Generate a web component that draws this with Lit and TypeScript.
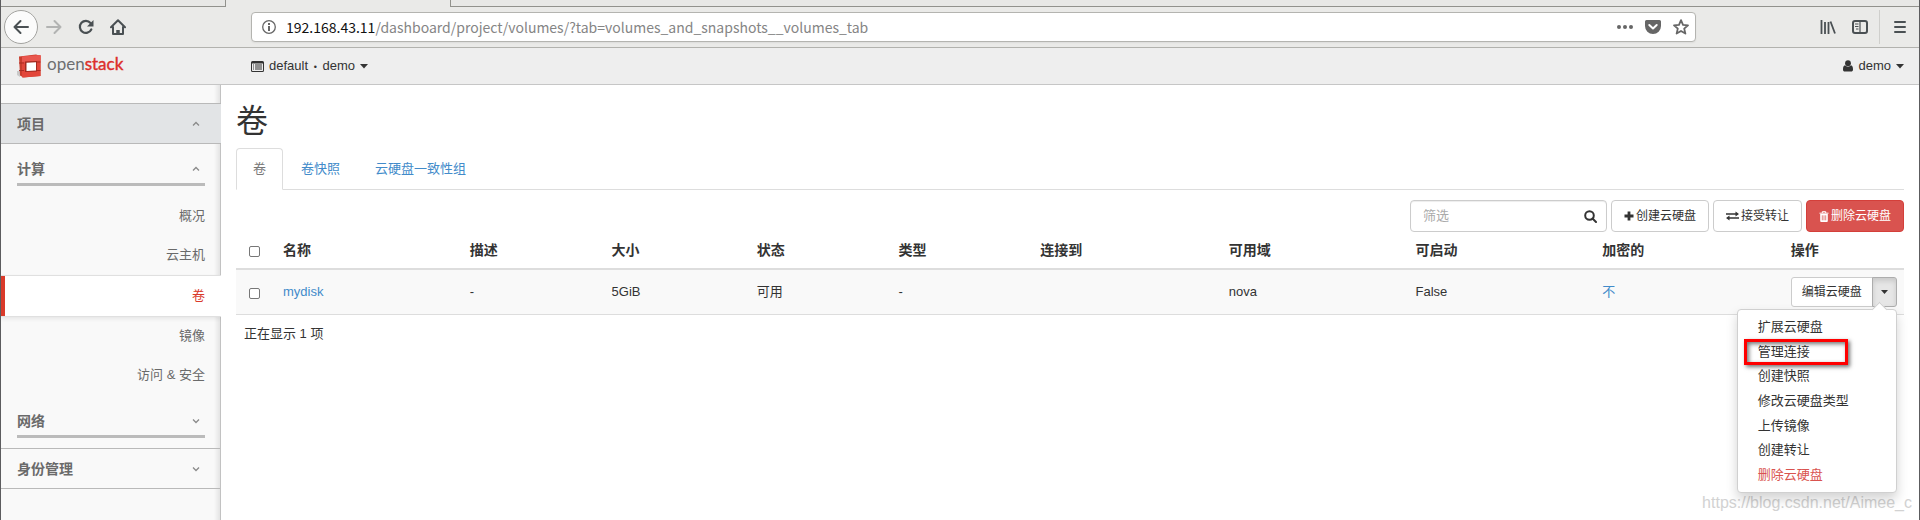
import { LitElement, html, css, svg } from "lit";
import { customElement, property, state } from "lit/decorators.js";
import { classMap } from "lit/directives/class-map.js";

const controls = css`
  :host, *, *::before, *::after { box-sizing: border-box; }
  a { color: inherit; text-decoration: none; }
  button, input { font: inherit; color: inherit; margin: 0; }
  button { cursor: pointer; padding: 0; border: 0; background: none; }
  svg { display: block; flex: none; }
`;

const caret = html`<svg width="8" height="5" viewBox="0 0 8 5"><path d="M0 0h8L4 4.6z" fill="currentColor"/></svg>`;

@customElement("browser-bar")
class BrowserBar extends LitElement {
  static styles = [controls, css`
    :host {
      display: block;
      background: #eaeae8;
      border-bottom: 1px solid #b2b2ae;
      color: #4a5053;
      font-family: "Noto Sans CJK SC", "Noto Sans", sans-serif;
    }
    .tabs { display: flex; height: 7px; }
    .tab { flex: 0 0 225px; background: #e8e8e6; border-bottom: 1px solid #92928d; border-right: 1px solid #92928d; }
    .tab.active { background: none; border-bottom: 0; }
    .rest { flex: 1; background: #e8e8e6; border-bottom: 1px solid #92928d; }
    .bar { display: flex; align-items: center; height: 40px; padding: 0 11px 0 3px; }
    .nav { display: flex; align-items: center; gap: 16px; width: 247px; flex: none; }
    .back {
      display: grid; place-items: center; width: 34px; height: 34px;
      border: 1px solid #a3a3a0; border-radius: 50%; background: #fbfbfb;
    }
    .nav .fwd { margin-left: -8px; color: #b2b3b2; }
    .address {
      display: flex; align-items: center; flex: 0 1 1445px; min-width: 0; height: 30px;
      padding: 0 6px 0 10px; background: #fff; border: 1px solid #b4b4b0; border-radius: 4px;
      box-shadow: 0 1px 2px rgba(0, 0, 0, 0.06); color: #666;
    }
    .url { flex: 1; min-width: 0; margin-left: 10px; font-size: 14px; line-height: 24px; color: #858585; white-space: nowrap; overflow: hidden; }
    .url b { font-weight: 400; color: #111; }
    .tools { display: flex; gap: 12px; }
    .right { display: flex; align-items: center; gap: 16px; margin-left: auto; }
    .sep { width: 1px; height: 34px; background: #cfcfcc; margin: 0 -4px 0 -5px; }
  `];

  render() {
    return html`
      <div class="tabs"><div class="tab"></div><div class="tab active"></div><div class="rest"></div></div>
      <div class="bar">
        <nav class="nav">
          <button class="back" aria-label="Back">
            <svg width="16" height="16" viewBox="0 0 16 16" fill="none" stroke="currentColor" stroke-width="2" stroke-linecap="round" stroke-linejoin="round"><path d="M15 8H1.5M7.5 2l-6 6 6 6"/></svg>
          </button>
          <button class="fwd" aria-label="Forward">
            <svg width="16" height="16" viewBox="0 0 16 16" fill="none" stroke="currentColor" stroke-width="2" stroke-linecap="round" stroke-linejoin="round"><path d="M1 8h13.5M8.500 2l6 6-6 6"/></svg>
          </button>
          <button aria-label="Reload">
            <svg width="16" height="16" viewBox="0 0 16 16"><path d="M13.300 10.500A6 6 0 1 1 12.500 4" fill="none" stroke="currentColor" stroke-width="2.200" stroke-linecap="round"/><path d="M15.500 1v6.500H9z" fill="currentColor"/></svg>
          </button>
          <button aria-label="Home">
            <svg width="16" height="16" viewBox="0 0 16 16" fill="none" stroke="currentColor" stroke-width="2" stroke-linecap="round" stroke-linejoin="round"><path d="M1 8.200 8 1.300l7 6.900M3 8v7h10V8"/><path d="M8 15v-4" stroke-width="3.500" stroke-linecap="butt"/></svg>
          </button>
        </nav>
        <div class="address">
          <svg width="14" height="14" viewBox="0 0 14 14"><circle cx="7" cy="7" r="6.300" fill="none" stroke="currentColor" stroke-width="1.300"/><path d="M6 6h2v5H6zM6 3h2v2H6z" fill="currentColor"/></svg>
          <div class="url"><b>192.168.43.11</b>/dashboard/project/volumes/?tab=volumes_and_snapshots__volumes_tab</div>
          <div class="tools">
            <button aria-label="Page actions"><svg width="16" height="16" viewBox="0 0 16 16" fill="currentColor"><circle cx="2" cy="8" r="2"/><circle cx="8" cy="8" r="2"/><circle cx="14" cy="8" r="2"/></svg></button>
            <button aria-label="Save to Pocket"><svg width="16" height="16" viewBox="0 0 16 16"><path d="M1.500 1h13A1.500 1.500 0 0 1 16 2.500V7A8 8 0 0 1 0 7V2.500A1.500 1.500 0 0 1 1.500 1z" fill="currentColor"/><path d="M4.300 6 8 9.500 11.700 6" fill="none" stroke="#fff" stroke-width="2" stroke-linecap="round" stroke-linejoin="round"/></svg></button>
            <button aria-label="Bookmark"><svg width="16" height="16" viewBox="0 0 16 16"><path d="m8 1.200 2 4.600 5 .5-3.800 3.300 1.200 5L8 12l-4.400 2.600 1.200-5L1 6.300l5-.5z" fill="none" stroke="currentColor" stroke-width="1.800" stroke-linejoin="round"/></svg></button>
          </div>
        </div>
        <div class="right">
          <button aria-label="Library"><svg width="16" height="16" viewBox="0 0 16 16" fill="none" stroke="currentColor" stroke-width="1.800"><path d="M1.500 1v14M5 3v12M8.500 3v12M10.500 2.500 15 14.500"/></svg></button>
          <button aria-label="Sidebars"><svg width="16" height="16" viewBox="0 0 16 16" fill="none" stroke="currentColor"><rect x="1" y="2" width="14" height="12" rx="2" stroke-width="2"/><path d="M8 2v12" stroke-width="1.200"/><path d="M3 5h3.500M3 7.500h3.500M4 10h2.500" stroke-width="1"/></svg></button>
          <span class="sep"></span>
          <button aria-label="Menu"><svg width="16" height="16" viewBox="0 0 16 16" stroke="currentColor" stroke-width="2" stroke-linecap="round"><path d="M3 3h10M3 8h10M3 13h10"/></svg></button>
        </div>
      </div>`;
  }
}

@customElement("top-bar")
class TopBar extends LitElement {
  static styles = [controls, css`
    :host { display: flex; align-items: center; height: 37px; padding: 0 15px; background: #eee; border-bottom: 1px solid #c6c6c6; }
    .brand { display: flex; align-items: center; gap: 5px; width: 235px; flex: none; font-family: Lato, "Noto Sans", sans-serif; font-size: 17px; line-height: 24px; color: #6d6e70; }
    .brand span { margin-bottom: 4px; }
    .brand b { font-weight: 400; color: #dc2f2b; -webkit-text-stroke: 0.4px #dc2f2b; }
    .menu { display: flex; align-items: center; gap: 5px; line-height: 20px; }
    .dot { margin: 0 2px; font-size: 9px; }
    .user { margin-left: auto; }
  `];

  render() {
    return html`
      <a class="brand" href="#">
        <svg width="26" height="24" viewBox="0 0 26 24">
          <path d="M1 17l3 0v6l-3-2z" fill="#c9c9c9"/>
          <path d="M3 2.500 20 .5l4.500 1.500v20l-17 1.500-3.500-2z" fill="#c93c2c"/>
          <path d="M6 2.500 24.500 1v21L6 23.500z" fill="#e2463a"/>
          <path d="M6 2.500 24.500 1v5.500L6 8z" fill="#e9574f"/>
          <path d="M3 8.500h5v1H3zM3 16h5v1H3zM21 7.500h3.500v1H21zM21 16h3.500v1H21z" fill="#a92a22"/>
          <path d="M9 7.500 21 7v10.500L9 18z" fill="#a22a20"/>
          <path d="M10.500 8.800 20 8.300v8.200l-9.500.5z" fill="#fff"/>
        </svg>
        <span>open<b>stack</b></span>
      </a>
      <button class="menu">
        <svg width="13" height="11" viewBox="0 0 13 11"><path d="M1.500 0h10A1.500 1.500 0 0 1 13 1.500v8a1.500 1.500 0 0 1-1.500 1.500h-10A1.500 1.500 0 0 1 0 9.500v-8A1.500 1.500 0 0 1 1.500 0zM1 2.500v7c0 .3.200.5.500.5h10c.3 0 .5-.2.500-.5v-7z" fill="currentColor" fill-rule="evenodd"/><path d="M2 4h1M2 6h1M2 8h1M4 4h7M4 6h7M4 8h7" stroke="currentColor"/></svg>
        <span>default <span class="dot">•</span> demo</span>${caret}
      </button>
      <button class="menu user">
        <svg width="10" height="12" viewBox="0 0 10 12" fill="currentColor"><circle cx="5" cy="3.200" r="2.900"/><path d="M2 5.300C.7 5.700 0 7 0 9.500 0 11 .8 11.500 1.800 11.500h6.400c1 0 1.800-.5 1.800-2 0-2.500-.7-3.800-2-4.200-1.600 1.700-4.400 1.700-6 0z"/></svg>
        <span>demo</span>${caret}
      </button>`;
  }
}

@customElement("side-nav")
class SideNav extends LitElement {
  static styles = [controls, css`
    :host {
      display: block; flex: none; width: 220px; padding-top: 18px; color: #6a6a6a;
      background: linear-gradient(to left, #e4e4e4, #f9f9f9 6px); border-right: 1px solid #c2c2c2;
    }
    .head { display: flex; align-items: center; justify-content: space-between; width: 100%; font-size: 14px; font-weight: 700; line-height: 20px; text-align: left; }
    .head svg { margin-right: 5px; }
    .dash { height: 40px; padding: 0 15px 0 16px; border-bottom: 1px solid #b9b9b9; }
    .dash.open { width: 220px; height: 41px; padding-right: 16px; background: #e2e4e6; border-top: 1px solid #b9b9b9; }
    .group { margin: 15px 15px 0 16px; border-bottom: 3px solid #bbb; padding-bottom: 4px; }
    .list { list-style: none; margin: 0; padding: 11px 0 1px; }
    .list a { display: block; height: 39px; padding: 9px 15px 10px 12px; line-height: 20px; text-align: right; }
    .list .current {
      width: 220px; height: 42px; padding: 10px 16px 10px 12px; color: #d93a2a; background: #fff;
      border: solid #e0e0e0; border-width: 1px 0; box-shadow: inset 4px 0 #d93a2a, 0 2px 4px rgba(0, 0, 0, 0.08);
    }
    .last { padding-bottom: 10px; border-bottom: 1px solid #b9b9b9; }
  `];

  private chevron(up: boolean) {
    return html`<svg width="8" height="6" viewBox="0 0 8 6" fill="none" stroke="#8a8a8a" stroke-width="1.300">${up ? svg`<path d="M1 4.500 4 1.500l3 3"/>` : svg`<path d="M1 1.500l3 3 3-3"/>`}</svg>`;
  }

  render() {
    return html`
      <button class="head dash open">项目${this.chevron(true)}</button>
      <div class="group"><button class="head">计算${this.chevron(true)}</button></div>
      <ul class="list">
        ${["概况", "云主机", "卷", "镜像", "访问 & 安全"].map(
          (name) => html`<li><a href="#" class=${classMap({ current: name === "卷" })}>${name}</a></li>`
        )}
      </ul>
      <div class="last"><div class="group"><button class="head">网络${this.chevron(false)}</button></div></div>
      <button class="head dash">身份管理${this.chevron(false)}</button>`;
  }
}

@customElement("action-menu")
class ActionMenu extends LitElement {
  @property({ type: Array }) items: string[] = [];
  @property() marked = "";
  @state() private open = true;

  static styles = [controls, css`
    :host { display: block; position: relative; width: 106px; }
    .group { display: flex; height: 30px; font-size: 12px; line-height: 18px; }
    .main { flex: 1; background: #fff; border: 1px solid #ccc; border-radius: 3px 0 0 3px; white-space: nowrap; }
    .toggle {
      display: grid; place-items: center; width: 25px; margin-left: -1px; background: #e6e6e6;
      border: 1px solid #adadad; border-radius: 0 3px 3px 0; box-shadow: inset 0 3px 5px rgba(0, 0, 0, 0.125);
    }
    .menu {
      position: absolute; z-index: 5; top: 32px; right: 0; width: 160px; min-height: 184px;
      display: grid; grid-auto-rows: 1fr; align-items: center; margin: 0; padding: 5px 0; list-style: none;
      background: #fff; border: 1px solid #d0d0d0; border-radius: 4px; box-shadow: 0 6px 12px rgba(0, 0, 0, 0.175);
    }
    .menu::before {
      content: ""; position: absolute; top: -6px; right: 11px; width: 11px; height: 11px;
      background: #fff; border: solid #d0d0d0; border-width: 1px 0 0 1px; transform: rotate(45deg);
    }
    .menu li { position: relative; }
    .menu a { display: block; padding: 0 20px; line-height: 20px; }
    .danger { color: #d9534f; }
    .marked::after {
      content: ""; position: absolute; inset: -3px 48px -3px 6px; border: 3px solid #f00;
      box-shadow: 2px 2px 4px rgba(0, 0, 0, 0.55), inset 2px 2px 4px rgba(0, 0, 0, 0.55);
    }
  `];

  render() {
    return html`
      <div class="group">
        <button class="main">编辑云硬盘</button>
        <button class="toggle" aria-label="更多操作" aria-expanded=${this.open} @click=${() => (this.open = !this.open)}>
          <svg width="7" height="4" viewBox="0 0 7 4"><path d="M0 0h7L3.500 4z" fill="currentColor"/></svg>
        </button>
      </div>
      ${this.open
        ? html`<ul class="menu">${this.items.map((item, i) => html`
            <li class=${classMap({ marked: item === this.marked })}>
              <a href="#" class=${classMap({ danger: i === this.items.length - 1 })}>${item}</a>
            </li>`)}</ul>`
        : null}`;
  }
}

@customElement("volumes-panel")
class VolumesPanel extends LitElement {
  private columns = ["名称", "描述", "大小", "状态", "类型", "连接到", "可用域", "可启动", "加密的", "操作"];
  private actions = ["扩展云硬盘", "管理连接", "创建快照", "修改云硬盘类型", "上传镜像", "创建转让", "删除云硬盘"];

  static styles = [controls, css`
    :host { display: block; flex: 1; min-width: 0; padding: 16px 15px 0; background: #fff; }
    h1 { margin: 0; font-size: 32px; font-weight: 400; line-height: 40px; }
    .tabs { display: flex; gap: 1px; margin-top: 7px; border-bottom: 1px solid #ddd; }
    .tabs a { height: 42px; margin-bottom: -1px; padding: 10px 16px; border: 1px solid transparent; line-height: 20px; color: #428bca; }
    .tabs .on { color: #777; background: #fff; border-color: #ddd #ddd #fff; border-radius: 4px 4px 0 0; }
    .bar { display: flex; justify-content: flex-end; gap: 4px; padding-top: 10px; font-size: 12px; }
    .search { display: flex; align-items: center; width: 197px; height: 32px; padding: 0 9px 0 12px; border: 1px solid #ccc; border-radius: 4px; box-shadow: inset 0 1px 1px rgba(0, 0, 0, 0.075); font-size: 13px; }
    .search input { flex: 1; min-width: 0; padding: 0; border: 0; outline: 0; background: none; }
    .search input::placeholder { color: #aaa; opacity: 1; }
    .btn { display: flex; align-items: center; gap: 1px; height: 32px; padding: 0 12px; background: #fff; border: 1px solid #ccc; border-radius: 4px; }
    .btn.wide { gap: 2px; }
    .btn.danger { color: #fff; background: #d9534f; border-color: #d43f3a; }
    table { width: 100%; border-collapse: separate; border-spacing: 0; table-layout: fixed; }
    th { height: 38px; padding: 0 8px; border-bottom: 2px solid #ddd; text-align: left; font-size: 14px; font-weight: 700; line-height: 18px; }
    td { height: 45px; padding: 0 8px; background: #f9f9f9; border-bottom: 1px solid #ddd; line-height: 20px; }
    a { color: #428bca; }
    .c0 { width: 39px; }
    .c1, .c7, .c8 { width: 11.2%; }
    .c6, .c9 { width: 11.3%; }
    .c2, .c4, .c5 { width: 8.5%; }
    .c3 { width: 8.7%; }
    input[type="checkbox"] { appearance: none; display: block; width: 11px; height: 11px; margin: 2px 0 0 5px; border: 1px solid #777; border-radius: 2px; background: #fff; }
    .count { margin: 0; padding: 9px 8px; line-height: 20px; }
  `];

  render() {
    return html`
      <h1>卷</h1>
      <nav class="tabs"><a class="on" href="#">卷</a><a href="#">卷快照</a><a href="#">云硬盘一致性组</a></nav>
      <div class="bar">
        <div class="search">
          <input type="text" placeholder="筛选" aria-label="筛选" />
          <button aria-label="搜索"><svg width="13" height="13" viewBox="0 0 13 13" fill="none" stroke="currentColor" stroke-width="2"><circle cx="5.500" cy="5.500" r="4.300"/><path d="m8.500 8.500 3.500 3.500" stroke-linecap="round"/></svg></button>
        </div>
        <button class="btn"><svg width="11" height="10" viewBox="0 0 11 10"><path d="M5 .5v9M.5 5h9" stroke="currentColor" stroke-width="2.800"/></svg>创建云硬盘</button>
        <button class="btn wide"><svg width="13" height="10" viewBox="0 0 13 10"><path d="M0 3h10M3 7h10" stroke="currentColor" stroke-width="1.700"/><path d="M9.500 .5 13 3 9.500 5.500zM3.500 4.500 0 7l3.500 2.500z" fill="currentColor"/></svg>接受转让</button>
        <button class="btn danger"><svg width="11" height="11" viewBox="0 0 11 11"><path d="M.5 2.200h9M3.300 2V.7h3.400V2" fill="none" stroke="currentColor"/><path d="M1.200 3h7.600v7a1 1 0 0 1-1 1H2.200a1 1 0 0 1-1-1z" fill="currentColor"/><path d="M3.300 4.300v5M5 4.300v5M6.700 4.300v5" stroke="#d9534f" stroke-width=".7"/></svg>删除云硬盘</button>
      </div>
      <table>
        <thead>
          <tr>
            <th class="c0"><input type="checkbox" aria-label="全选" /></th>
            ${this.columns.map((name, i) => html`<th class="c${i + 1}">${name}</th>`)}
          </tr>
        </thead>
        <tbody>
          <tr>
            <td><input type="checkbox" aria-label="mydisk" /></td>
            <td><a href="#">mydisk</a></td>
            <td>-</td><td>5GiB</td><td>可用</td><td>-</td><td></td><td>nova</td><td>False</td>
            <td><a href="#">不</a></td>
            <td><action-menu .items=${this.actions} marked="管理连接"></action-menu></td>
          </tr>
        </tbody>
      </table>
      <p class="count">正在显示 1 项</p>`;
  }
}

@customElement("app-root")
class AppRoot extends LitElement {
  static styles = css`
    :host {
      position: relative; display: flex; flex-direction: column; box-sizing: border-box; min-height: 100vh;
      border: solid #5c5c5e; border-width: 0 1px; overflow: hidden; background: #fff;
      color: #333; font: 13px/20px "Liberation Sans", "Noto Sans CJK SC", sans-serif;
    }
    .body { display: flex; flex: 1; }
    .watermark { position: absolute; right: 7px; bottom: 6px; font-size: 16px; line-height: 22px; color: #d2d2d2; pointer-events: none; }
  `;

  render() {
    return html`
      <browser-bar></browser-bar>
      <top-bar></top-bar>
      <div class="body"><side-nav></side-nav><volumes-panel></volumes-panel></div>
      <div class="watermark">https://blog.csdn.net/Aimee_c</div>`;
  }
}
